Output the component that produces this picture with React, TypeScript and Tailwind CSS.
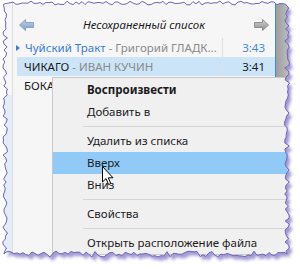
import React from "react";

// deterministic jitter for the torn paper edge
function rnd(i: number) {
  const x = Math.sin(i * 12.9898 + 78.233) * 43758.5453;
  return x - Math.floor(x);
}

function tornPath() {
  const pts: [number, number][] = [];
  let k = 1;
  for (let x = 4; x < 287; x += 3) pts.push([x, 3 + (rnd(k++) - 0.5) * 4]);
  for (let y = 5; y < 254; y += 3) pts.push([287 + (rnd(k++) - 0.5) * 5, y]);
  for (let x = 287; x > 4; x -= 3) pts.push([x, 254 + (rnd(k++) - 0.5) * 6]);
  for (let y = 254; y > 4; y -= 3) pts.push([5 + (rnd(k++) - 0.5) * 5, y]);
  return "M" + pts.map((p) => p[0].toFixed(1) + "," + p[1].toFixed(1)).join("L") + "Z";
}

function TornEdge() {
  const d = tornPath();
  const outside = "M-10,-10H310V280H-10Z" + d;
  return (
    <svg className="pointer-events-none absolute left-0 top-0" width={300} height={270}>
      <defs>
        <clipPath id="outside">
          <path d={outside} clipRule="evenodd" />
        </clipPath>
        <filter id="blur" x="-10%" y="-10%" width="120%" height="120%">
          <feGaussianBlur stdDeviation="1.6" />
        </filter>
      </defs>
      <path d={outside} fill="#ffffff" fillRule="evenodd" />
      <g clipPath="url(#outside)">
        <path d={d} transform="translate(3,4)" fill="#8a82ca" opacity={0.8} filter="url(#blur)" />
      </g>
      <path d={d} fill="none" stroke="#6f66b6" strokeWidth={1} />
    </svg>
  );
}

function ArrowLeft() {
  return (
    <svg width={15} height={12} viewBox="0 0 15 12">
      <defs>
        <linearGradient id="al" x1="0" y1="0" x2="0" y2="1">
          <stop offset="0" stopColor="#c3d3e8" />
          <stop offset="1" stopColor="#7f9dc6" />
        </linearGradient>
      </defs>
      <path d="M0.5,6 L6.5,0.5 L6.5,3.5 L14.5,3.5 L14.5,8.5 L6.5,8.5 L6.5,11.5 Z" fill="url(#al)" stroke="#7c95ba" strokeWidth={0.8} />
    </svg>
  );
}

function ArrowRight() {
  return (
    <svg width={15} height={12} viewBox="0 0 15 12">
      <defs>
        <linearGradient id="ar" x1="0" y1="0" x2="0" y2="1">
          <stop offset="0" stopColor="#d2d2d2" />
          <stop offset="1" stopColor="#8e8e8e" />
        </linearGradient>
      </defs>
      <path d="M14.5,6 L8.5,0.5 L8.5,3.5 L0.5,3.5 L0.5,8.5 L8.5,8.5 L8.5,11.5 Z" fill="url(#ar)" stroke="#7d7d7d" strokeWidth={0.8} />
    </svg>
  );
}

function Cursor() {
  return (
    <svg className="pointer-events-none absolute left-[102px] top-[166px]" width={13} height={20} viewBox="0 0 13 20">
      <path d="M0.5,0.5 L0.5,16 L4,12.6 L6.6,18.6 L8.8,17.6 L6.3,11.8 L11,11.8 Z" fill="#ffffff" stroke="#000000" strokeWidth={1} strokeLinejoin="round" />
    </svg>
  );
}

function MenuItem({ label, bold, active }: { label: string; bold?: boolean; active?: boolean }) {
  return (
    <div className={`flex h-[22px] items-center pl-[34px] ${active ? "bg-[#91c9f7]" : ""} ${bold ? "font-bold" : ""}`}>
      {label}
    </div>
  );
}

function Sep() {
  return <div className="ml-[30px] mt-[3px] mb-[3px] h-px bg-[#d6d6d6]" />;
}

export default function App() {
  return (
    <div className="relative h-[270px] w-[300px] overflow-hidden bg-white font-['Noto_Sans',sans-serif] text-[11.5px] text-[#1b1b1b]">
      <div className="ml-[2px] flex h-[260px] w-[290px]">
        <div className="flex w-[10px] flex-col">
          <div className="h-[95px] bg-[#f6f6f6]" />
          <div className="flex-1 bg-[#e2edf8]" />
        </div>

        <div className="flex w-[263px] flex-col border-l border-[#dcdcdc] bg-[#f6f6f6]">
          <div className="flex h-[38px] items-center justify-between pl-[6px] pr-[6px] pt-[12px]">
            <ArrowLeft />
            <span className="italic">Несохраненный список</span>
            <ArrowRight />
          </div>

          <div className="flex h-[19px] items-center">
            <span className="ml-[3px] h-0 w-0 border-y-[3px] border-l-[4px] border-y-transparent border-l-[#3a7bdc]" />
            <span className="ml-[5px] flex-1 whitespace-nowrap">
              <span className="text-[#3b7ad6]">Чуйский Тракт</span>
              <span className="text-[#8a8a8a]"> - Григорий ГЛАДК...</span>
            </span>
            <span className="flex h-full w-[53px] items-center justify-end border-l border-[#e0e0e0] pr-[10px] text-[#3d86e6]">3:43</span>
          </div>

          <div className="ml-[4px] flex h-[19px] items-center bg-[#cce4f7]">
            <span className="ml-[7px] flex-1 whitespace-nowrap">
              <span>ЧИКАГО</span>
              <span className="text-[#8a8a8a]"> - ИВАН КУЧИН</span>
            </span>
            <span className="flex h-full w-[53px] items-center justify-end border-l border-[#d6e4ef] pr-[10px]">3:41</span>
          </div>

          <div className="flex h-[19px] items-center">
            <span className="ml-[11px]">БОКА</span>
          </div>
        </div>

        <div className="w-[17px] border-l border-[#3c8ce6] bg-gradient-to-r from-[#9d9d9d] to-[#c6c6c6]" />
      </div>

      <div className="absolute left-[52px] top-[77px] w-[245px] border border-[#c9c9c9] bg-[#f0f0f0] pt-px">
        <MenuItem label="Воспроизвести" bold />
        <MenuItem label="Добавить в" />
        <Sep />
        <MenuItem label="Удалить из списка" />
        <MenuItem label="Вверх" active />
        <MenuItem label="Вниз" />
        <Sep />
        <MenuItem label="Свойства" />
        <Sep />
        <MenuItem label="Открыть расположение файла" />
      </div>

      <Cursor />
      <TornEdge />
    </div>
  );
}
